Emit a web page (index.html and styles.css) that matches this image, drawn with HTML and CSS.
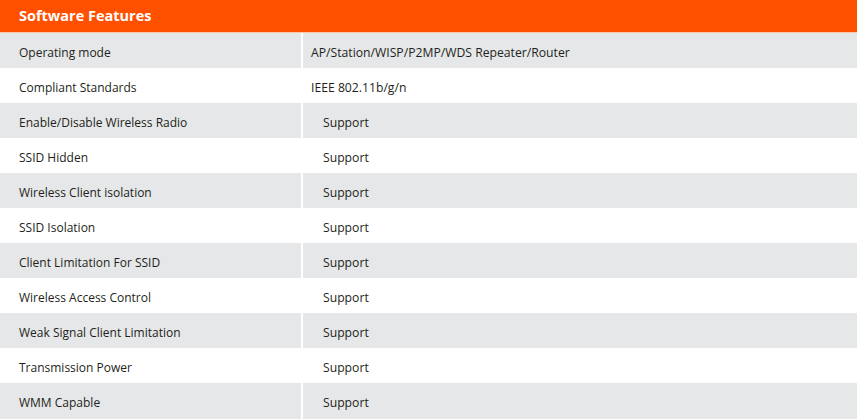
FILE: index.html
```html
<!DOCTYPE html>
<html>
<head>
<meta charset="utf-8">
<link rel="stylesheet" href="styles.css">
</head>
<body>
<div class="spec">
  <div class="spec-head">Software Features</div>
  <div class="row gray"><div class="key">Operating mode</div><div class="val near">AP/Station/WISP/P2MP/WDS Repeater/Router</div></div>
  <div class="row"><div class="key">Compliant Standards</div><div class="val near">IEEE 802.11b/g/n</div></div>
  <div class="row gray"><div class="key">Enable/Disable Wireless Radio</div><div class="val">Support</div></div>
  <div class="row"><div class="key">SSID Hidden</div><div class="val">Support</div></div>
  <div class="row gray"><div class="key">Wireless Client isolation</div><div class="val">Support</div></div>
  <div class="row"><div class="key">SSID Isolation</div><div class="val">Support</div></div>
  <div class="row gray"><div class="key">Client Limitation For SSID</div><div class="val">Support</div></div>
  <div class="row"><div class="key">Wireless Access Control</div><div class="val">Support</div></div>
  <div class="row gray"><div class="key">Weak Signal Client Limitation</div><div class="val">Support</div></div>
  <div class="row"><div class="key">Transmission Power</div><div class="val">Support</div></div>
  <div class="row gray last"><div class="key">WMM Capable</div><div class="val">Support</div></div>
</div>
</body>
</html>
```
FILE: styles.css
```css
html, body {
  margin: 0;
  padding: 0;
  background: #ffffff;
}
.spec {
  width: 857px;
  font-family: "Open Sans", "Noto Sans", sans-serif;
  color: #231f20;
}
.spec-head {
  height: 32px;
  background: #ff5000;
  border-bottom: 1px solid #fbc7a6;
  color: #ffffff;
  font-weight: 700;
  font-size: 14.5px;
  line-height: 32px;
  padding-left: 19px;
}
.row {
  display: flex;
  height: 35px;
  align-items: center;
  font-size: 12px;
}
.row.last {
  height: 36px;
}
.row.gray {
  background: #e6e7e8;
}
.key {
  width: 303px;
  padding-left: 19px;
  height: 100%;
  display: flex;
  align-items: center;
  border-right: 2px solid #ffffff;
  padding-top: 3px;
  box-sizing: border-box;
}
.val {
  padding-left: 20px;
  padding-top: 3px;
  font-size: 12.2px;
}
.val.near {
  padding-left: 8px;
}
```
